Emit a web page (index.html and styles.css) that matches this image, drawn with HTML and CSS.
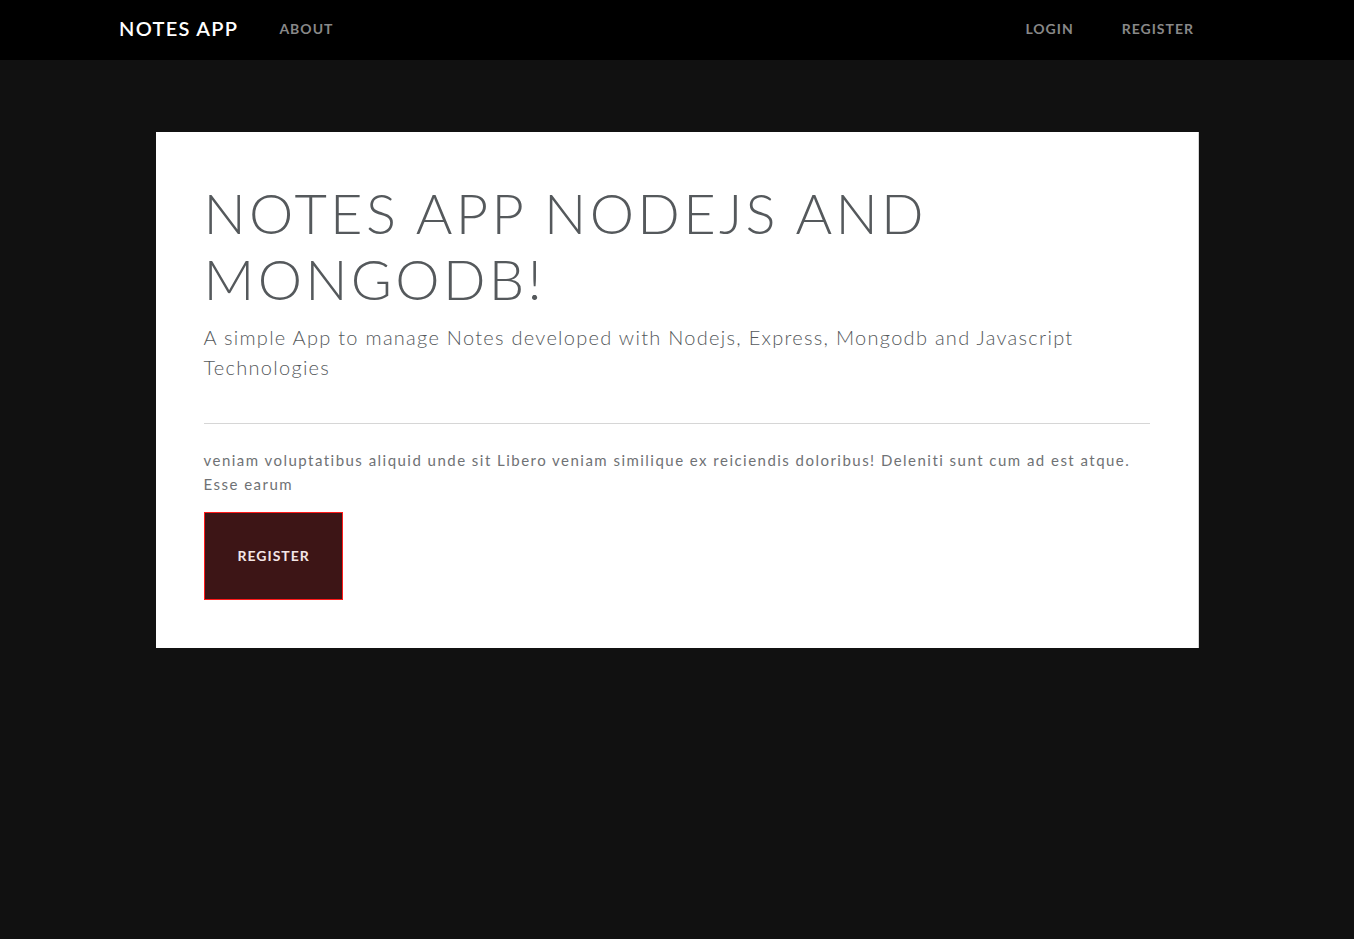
FILE: index.html
```html
<!DOCTYPE html>
<html lang="en">
<head>
<meta charset="utf-8">
<title>Notes App</title>
<link rel="stylesheet" href="styles.css">
</head>
<body>
<nav class="navbar">
  <div class="nav-inner">
    <a class="brand" href="#">NOTES APP</a>
    <ul class="nav-left">
      <li><a class="nav-link" href="#">ABOUT</a></li>
    </ul>
    <ul class="nav-right">
      <li><a class="nav-link" href="#">LOGIN</a></li>
      <li><a class="nav-link" href="#">REGISTER</a></li>
    </ul>
  </div>
</nav>
<main class="main">
  <section class="jumbotron">
    <h1 class="display">NOTES APP NODEJS AND MONGODB!</h1>
    <p class="lead">A simple App to manage Notes developed with Nodejs, Express, Mongodb and Javascript Technologies</p>
    <hr class="divider">
    <p class="text">veniam voluptatibus aliquid unde sit Libero veniam similique ex reiciendis doloribus! Deleniti sunt cum ad est atque. Esse earum</p>
    <a class="btn-register" href="#">REGISTER</a>
  </section>
</main>
</body>
</html>
```
FILE: styles.css
```css
html, body {
  margin: 0;
  padding: 0;
}
body {
  background: #111111;
  font-family: "Lato", "Noto Sans", sans-serif;
  color: #55595c;
  min-height: 939px;
}
a { text-decoration: none; }
ul { list-style: none; margin: 0; padding: 0; }

.navbar {
  background: #000000;
  height: 60px;
}
.nav-inner {
  width: 1116px;
  margin: 0 auto;
  height: 60px;
  box-sizing: border-box;
  padding-bottom: 5px;
  display: flex;
  align-items: center;
}
.brand {
  color: #ffffff;
  font-size: 20px;
  font-weight: 600;
  letter-spacing: 1.3px;
  margin-right: 41px;
}
.nav-left, .nav-right {
  display: flex;
  align-items: center;
}
.nav-right {
  margin-left: auto;
  gap: 48px;
  margin-right: 41px;
}
.nav-link {
  color: #888888;
  font-size: 14px;
  font-weight: 700;
  letter-spacing: 1px;
}

.main {
  padding-top: 72px;
}
.jumbotron {
  width: 1043px;
  box-sizing: border-box;
  margin: 0 auto;
  background: #ffffff;
  border-right: 1px solid #d5d5d5;
  padding: 48px;
}
.display {
  margin: 0;
  font-size: 56px;
  font-weight: 300;
  line-height: 66px;
  letter-spacing: 3.3px;
  color: #55595c;
}
.lead {
  margin: 10px 0 0;
  font-size: 20px;
  font-weight: 300;
  line-height: 30px;
  letter-spacing: 1.28px;
  color: #55595c;
}
.divider {
  border: 0;
  border-top: 1px solid #d6d6d6;
  margin: 41px 0 0;
}
.text {
  margin: 24px 0 0;
  font-size: 15px;
  font-weight: 400;
  line-height: 24px;
  letter-spacing: 1.47px;
  color: #6f7275;
}
.btn-register {
  display: inline-block;
  margin-top: 16px;
  background: #3d1516;
  border: 1px solid #ff1a1a;
  color: #f3e6e6;
  font-size: 14px;
  font-weight: 700;
  letter-spacing: 1px;
  line-height: 24px;
  padding: 31px 32px 31px 33px;
}
```
